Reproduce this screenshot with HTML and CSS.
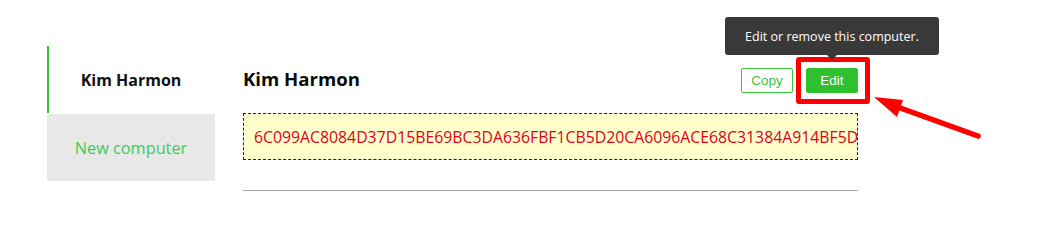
FILE: index.html
```html
<!DOCTYPE html>
<html>
<head>
<meta charset="utf-8">
<link rel="stylesheet" href="styles.css">
</head>
<body>
<div class="page">
  <nav class="sidebar">
    <div class="tab tab-active">Kim Harmon</div>
    <div class="tab tab-new">New computer</div>
  </nav>
  <main class="content">
    <div class="header">
      <h1 class="title">Kim Harmon</h1>
      <div class="actions">
        <button class="btn btn-outline">Copy</button>
        <div class="edit-wrap">
          <div class="tooltip">Edit or remove this computer.</div>
          <button class="btn btn-solid">Edit</button>
        </div>
      </div>
    </div>
    <div class="key">6C099AC8084D37D15BE69BC3DA636FBF1CB5D20CA6096ACE68C31384A914BF5D</div>
    <hr class="rule">
  </main>
  <svg class="pointer" width="130" height="60" viewBox="0 0 130 60">
    <line x1="106" y1="51" x2="20" y2="20" stroke="#ff0000" stroke-width="5.5" stroke-linecap="round"/>
    <polygon points="2,12 31,15 25,32" fill="#ff0000"/>
  </svg>
</div>
</body>
</html>
```
FILE: styles.css
```css
html, body {
  margin: 0;
  padding: 0;
  background: #ffffff;
}
body {
  font-family: "Open Sans", "Noto Sans", sans-serif;
  color: #1a1a1a;
}
.page {
  position: relative;
  display: flex;
  gap: 28px;
  padding: 46px 0 0 47px;
  height: 181px;
}
.sidebar {
  width: 168px;
  display: flex;
  flex-direction: column;
}
.tab {
  height: 67px;
  display: flex;
  align-items: center;
  justify-content: center;
}
.tab-active {
  border-left: 2px solid #33c233;
  font-weight: 700;
  font-size: 16px;
  color: #111111;
  padding-right: 2px;
}
.tab-new {
  margin-top: 1px;
  background: #e8e8e8;
  color: #3ccc5a;
  font-size: 16.3px;
}
.content {
  width: 615px;
  display: flex;
  flex-direction: column;
}
.header {
  height: 67px;
  display: flex;
  align-items: center;
  justify-content: space-between;
}
.title {
  margin: 0;
  font-size: 18.6px;
  font-weight: 700;
  color: #0a0a0a;
  position: relative;
  top: -1px;
}
.actions {
  display: flex;
  align-items: center;
  gap: 13px;
  position: relative;
  top: 1px;
}
.btn {
  font-family: "Liberation Sans", Arial, sans-serif;
  font-size: 13.5px;
  height: 25px;
  width: 52px;
  border-radius: 2px;
  padding: 0;
  cursor: pointer;
}
.btn-outline {
  background: #ffffff;
  border: 1px solid #39c439;
  color: #39c439;
}
.btn-solid {
  background: #2fc02f;
  border: 1px solid #2fc02f;
  color: #ffffff;
  display: block;
}
.edit-wrap {
  position: relative;
}
.edit-wrap::after {
  content: "";
  position: absolute;
  top: -11px;
  bottom: -11px;
  left: -10px;
  right: -12px;
  border: 5px solid #ff0000;
  border-radius: 3px;
  pointer-events: none;
}
.tooltip {
  position: absolute;
  bottom: 38px;
  left: 50%;
  transform: translateX(-50%);
  width: 214px;
  height: 38px;
  box-sizing: border-box;
  background: #393939;
  color: #ffffff;
  font-size: 12.5px;
  border-radius: 3px;
  display: flex;
  align-items: center;
  justify-content: center;
  white-space: nowrap;
  z-index: 2;
}
.tooltip::after {
  content: "";
  position: absolute;
  top: 100%;
  left: 50%;
  margin-left: -5px;
  border: 5px solid transparent;
  border-top-color: #393939;
}
.key {
  height: 47px;
  box-sizing: border-box;
  border: 1px dashed #222;
  background: #ffffcc;
  color: #e0001b;
  font-size: 15.8px;
  padding-left: 10px;
  display: flex;
  align-items: center;
  white-space: nowrap;
}
.rule {
  margin: 30px 0 0 0;
  border: 0;
  border-top: 1px solid #a8a8a8;
  height: 0;
}
.pointer {
  position: absolute;
  left: 872px;
  top: 85px;
}
```
